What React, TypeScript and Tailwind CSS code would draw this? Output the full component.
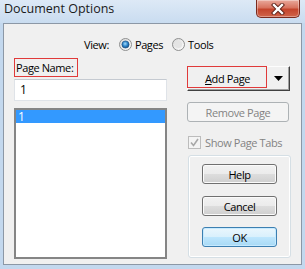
const btn =
  "flex items-center justify-center rounded-[3px] border border-[#707070] bg-[linear-gradient(to_bottom,#f2f2f2_0%,#ebebeb_50%,#dddddd_51%,#cfcfcf_100%)] shadow-[inset_0_0_0_1px_#fbfbfb]";

function CloseButton() {
  return (
    <div className="absolute right-[5px] top-0 h-[18px] w-[44px] rounded-b-[5px] border border-t-0 border-[#7a2a1e] bg-[linear-gradient(to_bottom,#e9a99c_0%,#d8735f_45%,#c4442c_55%,#d0644a_100%)] shadow-[inset_0_0_0_1px_rgba(255,255,255,0.35)] flex items-center justify-center">
      <svg width="14" height="12" viewBox="0 0 14 12">
        <path d="M3 2 L11 10 M11 2 L3 10" stroke="#5a1f16" strokeWidth="4.2" strokeLinecap="square" />
        <path d="M3 2 L11 10 M11 2 L3 10" stroke="#ffffff" strokeWidth="2.4" strokeLinecap="square" />
      </svg>
    </div>
  );
}

function Radio({ checked }: { checked?: boolean }) {
  return (
    <svg width="13" height="13" viewBox="0 0 13 13">
      <defs>
        <linearGradient id="rbg" x1="0" y1="0" x2="1" y2="1">
          <stop offset="0" stopColor="#d8d8d8" />
          <stop offset="1" stopColor="#ffffff" />
        </linearGradient>
        <radialGradient id="rdot" cx="0.45" cy="0.4" r="0.6">
          <stop offset="0" stopColor="#a6dcf9" />
          <stop offset="0.55" stopColor="#2f86cc" />
          <stop offset="1" stopColor="#144f86" />
        </radialGradient>
      </defs>
      <circle cx="6.5" cy="6.5" r="6" fill="url(#rbg)" stroke="#8e8f8f" />
      {checked ? (
        <circle cx="6.5" cy="6.5" r="3.6" fill="url(#rdot)" stroke="#1b4c7c" strokeWidth="0.6" />
      ) : (
        <circle cx="6.5" cy="6.5" r="3.6" fill="#e4e4e4" />
      )}
    </svg>
  );
}

export default function App() {
  return (
    <div className="w-[305px] h-[269px] flex flex-col overflow-hidden bg-[#c3d8ee] font-['Open_Sans',sans-serif] text-[11px] tracking-[-0.4px] leading-none text-black whitespace-nowrap">
      {/* title bar */}
      <div className="relative h-[23px] shrink-0 bg-[linear-gradient(to_bottom,#dde9f6,#c9dcf0)]">
        <span className="absolute left-[4px] top-[3px] text-[12.5px] tracking-normal text-[#1a1a1a]">Document Options</span>
        <CloseButton />
      </div>

      {/* client */}
      <div className="mx-[3px] mb-[4px] flex-1 flex flex-col border border-[#8c98a6] bg-[#f0f0f0]">
        {/* view row */}
        <div className="mt-[13px] ml-[80px] h-[14px] flex items-center">
          <span>View:</span>
          <span className="ml-[10px]"><Radio checked /></span>
          <span className="ml-[3px]">Pages</span>
          <span className="ml-[9px]"><Radio /></span>
          <span className="ml-[3px]">Tools</span>
        </div>

        <div className="mt-[7px] ml-[10px] flex">
          {/* left column */}
          <div className="w-[153px] flex flex-col">
            <div className="h-[19px] w-[64px] flex items-center pl-[1px] border border-[#e03a3a]">Page Name:</div>
            <div className="mt-[2px] h-[22px] flex items-center pl-[5px] bg-white border border-[#dfe3e8] border-t-[#c5cad1] text-[12px]">1</div>
            <div className="mt-[7px] h-[151px] border-2 border-[#858585] bg-white">
              <div className="h-[13px] bg-[#3399ff] text-white pl-[2px] flex items-center text-[12px]">1</div>
            </div>
          </div>

          {/* right column */}
          <div className="ml-[20px] w-[104px] flex flex-col">
            <div className="relative mt-[8px] h-[25px] w-[103px] flex bg-[#f0f0f0] border border-[#fdfdfd] border-r-[#404040] border-b-[#404040] shadow-[inset_-1px_-1px_0_#a0a0a0]">
              <div className="flex-1 flex items-center justify-center">
                <span><span className="underline">A</span>dd Page</span>
              </div>
              <div className="w-[22px] flex items-center justify-center">
                <svg width="9" height="5" viewBox="0 0 9 5"><path d="M0 0 H9 L4.5 5 Z" fill="#000" /></svg>
              </div>
              <div className="absolute left-[-1px] top-[-1px] h-[22px] w-[80px] border border-[#e03a3a]" />
            </div>

            <div className="mt-[11px] h-[20px] w-[102px] flex items-center justify-center rounded-[3px] border border-[#adb2b5] bg-[#f4f4f4] text-[#838383]">
              Remove Page
            </div>

            <div className="mt-[14px] ml-[1px] h-[12px] flex items-center">
              <svg width="13" height="13" viewBox="0 0 13 13">
                <rect x="0.5" y="0.5" width="12" height="12" fill="#f4f4f4" stroke="#bcbcbc" />
                <path d="M3 6.5 L5.5 9.5 L10 3" fill="none" stroke="#a8a8a8" strokeWidth="1.6" />
              </svg>
              <span className="ml-[4px] text-[#838383]">Show Page Tabs</span>
            </div>

            <div className="mt-[7px] ml-[1px] h-[103px] w-[103px] rounded-[3px] border border-[#d5dfe5] shadow-[inset_0_0_0_1px_#ffffff] flex flex-col items-center pt-[8px]">
              <div className={`${btn} h-[20px] w-[75px]`}>Help</div>
              <div className={`${btn} mt-[12px] h-[20px] w-[75px]`}>Cancel</div>
              <div className="mt-[11px] h-[20px] w-[75px] flex items-center justify-center rounded-[3px] border border-[#3c7fb1] bg-[linear-gradient(to_bottom,#eaf6fd_0%,#d9f0fc_50%,#bee6fd_51%,#a7d9f5_100%)] shadow-[inset_0_0_0_1px_#c6eaff]">
                OK
              </div>
            </div>
          </div>
        </div>
      </div>
    </div>
  );
}
